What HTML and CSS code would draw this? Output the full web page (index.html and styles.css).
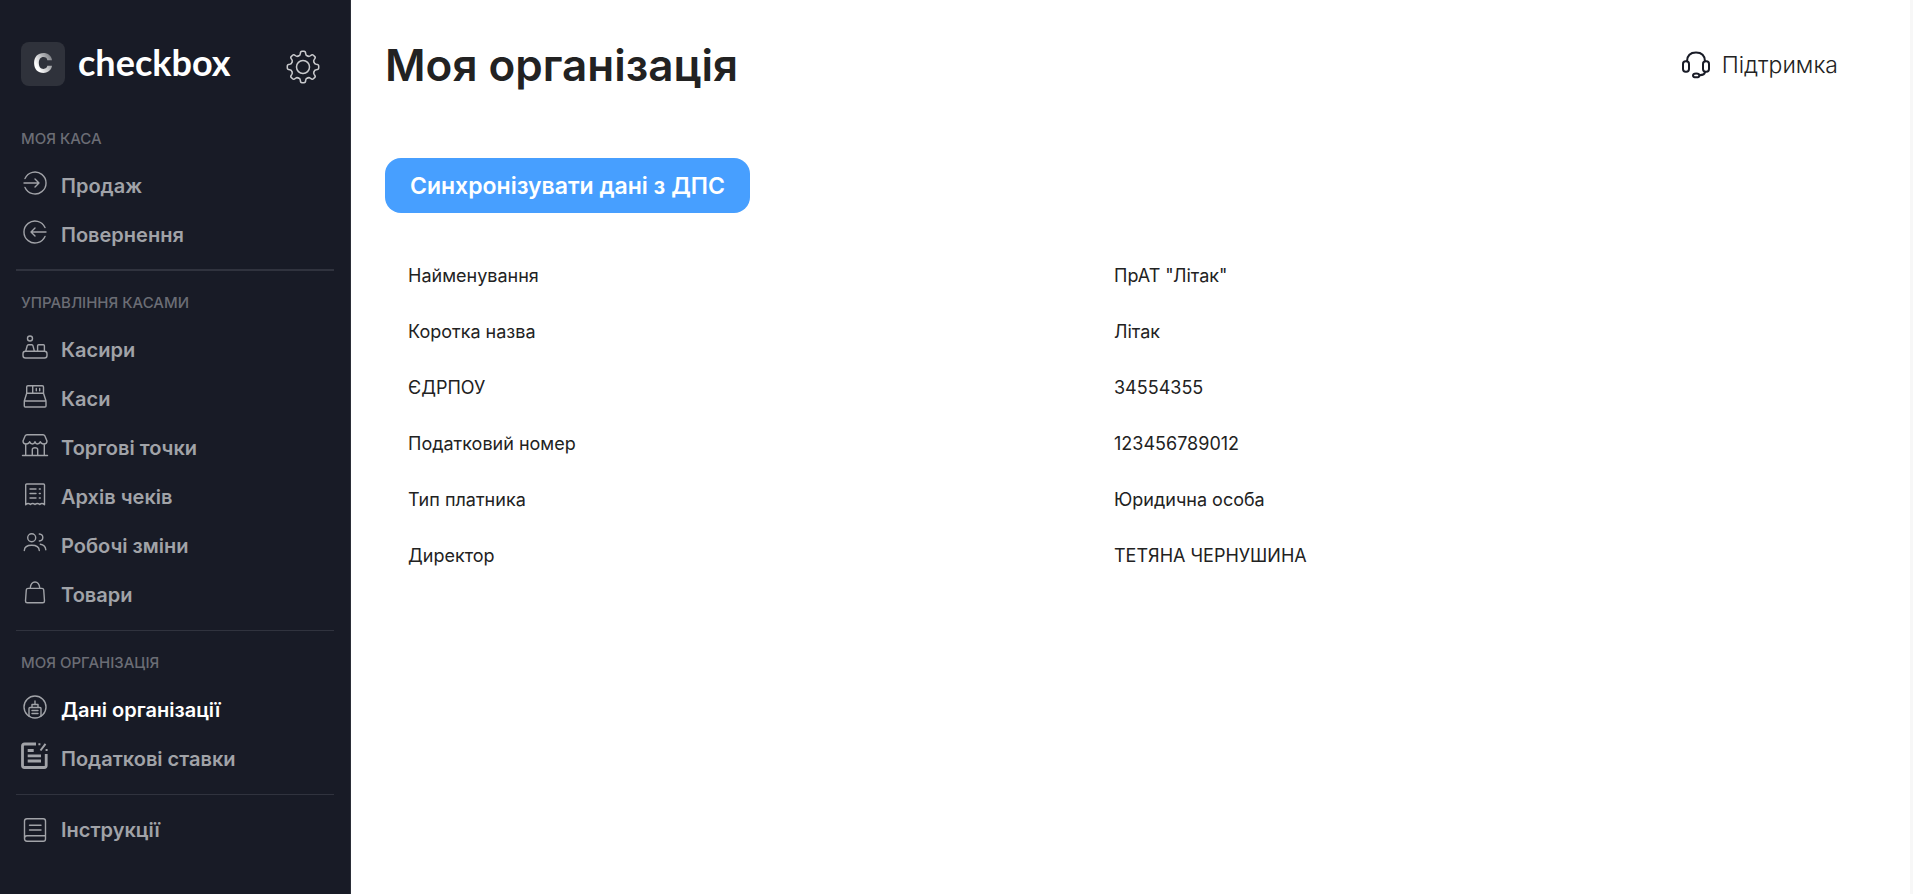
FILE: index.html
```html
<!DOCTYPE html>
<html lang="uk">
<head>
<meta charset="utf-8">
<title>Моя організація</title>
<link rel="stylesheet" href="styles.css">
</head>
<body>
<div class="layout">
  <aside class="sidebar">
    <div class="brand">
      <a class="brand-link" href="#">
        <span class="brand-mark"><span class="brand-letter">C</span></span>
        <span class="brand-name">checkbox</span>
      </a>
      <button class="settings" type="button" aria-label="Налаштування">
        <svg viewBox="-17 -17 34 34" width="34" height="34">
          <defs><path id="tooth" d="M-4.6 -11.1Q-2.9 -11.3 -2.7 -13.2Q-2.6 -15.7 -1 -15.7H1Q2.6 -15.7 2.7 -13.2Q2.9 -11.3 4.6 -11.1"/></defs>
          <use href="#tooth"/><use href="#tooth" transform="rotate(45)"/><use href="#tooth" transform="rotate(90)"/><use href="#tooth" transform="rotate(135)"/><use href="#tooth" transform="rotate(180)"/><use href="#tooth" transform="rotate(225)"/><use href="#tooth" transform="rotate(270)"/><use href="#tooth" transform="rotate(315)"/>
          <circle r="6.5"/>
        </svg>
      </button>
    </div>
    <nav>
      <section class="group group-strong">
        <h2 class="group-title">МОЯ КАСА</h2>
        <a class="item" href="#"><svg class="icon" viewBox="0 0 28 28"><path d="M4 9.5A11 11 0 1 1 4 18.5M3 14H18M14 10L18 14L14 18"/></svg>Продаж</a>
        <a class="item" href="#"><svg class="icon" viewBox="0 0 28 28"><path d="M24 9.5A11 11 0 1 0 24 18.5M25 14H10M14 10L10 14L14 18"/></svg>Повернення</a>
      </section>
      <section class="group">
        <h2 class="group-title">УПРАВЛІННЯ КАСАМИ</h2>
        <a class="item" href="#"><svg class="icon" viewBox="0 0 28 28"><circle cx="9" cy="5.5" r="2.5"/><rect x="2" y="18.3" width="24" height="6.7" rx="2.5"/><path d="M4.8 18L6.2 12.8Q6.5 11.8 7.5 11.8H10.8Q11.8 11.8 12 12.8L13.3 18M16.6 18V12.8Q16.6 11.8 17.6 11.8H22.4Q23.4 11.8 23.4 12.8V18"/></svg>Касири</a>
        <a class="item" href="#"><svg class="icon" viewBox="0 0 28 28"><path d="M5.7 11.3V5Q5.7 3.8 6.9 3.8H21.3Q22.5 3.8 22.5 5V11.3ZM11.7 4V11M15.3 6.5V8.8M18.7 6.5V8.8M5.7 11.3L3.3 19V24Q3.3 25 4.3 25H24Q25 25 25 24V19L22.5 11.3M3.3 19H25"/></svg>Каси</a>
        <a class="item" href="#"><svg class="icon" viewBox="0 0 28 28"><path d="M6 3.7H22Q23.3 3.7 23.8 4.8L26 10Q26 13 23 13Q20 13 19.3 10.7Q18.5 13 16.2 13Q14.5 13 14 10.7Q13.3 13 11.5 13Q9.4 13 8.7 10.7Q8 13 5 13Q2 13 2 10L4.2 4.8Q4.7 3.7 6 3.7ZM4.7 13V24.5M23.3 13V24.5M1.5 24.5H26.5M11.3 24.5V18.5Q11.3 16.7 14 16.7Q16.7 16.7 16.7 18.5V24.5"/></svg>Торгові точки</a>
        <a class="item" href="#"><svg class="icon" viewBox="0 0 28 28"><path d="M4.7 24.8V5Q4.7 4 5.7 4H22.5Q23.5 4 23.5 5V24.8Q21 22.5 18.8 24.5Q16.4 22.5 14 24.5Q11.6 22.5 9.4 24.5Q7 22.5 4.7 24.8ZM9 9H15M9 13.5H15M9 18H15M18.3 9H19.3M18.3 13.5H19.3M18.3 18H19.3"/></svg>Архів чеків</a>
        <a class="item" href="#"><svg class="icon" viewBox="0 0 28 28"><circle cx="10.7" cy="8.7" r="4"/><path d="M3.3 21.5Q3.5 16.2 10.7 16.2Q18 16.2 18.3 21.5M18.3 5Q21.8 5.3 21.8 8.4Q21.8 11.5 18.3 12M19.3 15.2Q24.4 15.8 24.8 20.8"/></svg>Робочі зміни</a>
        <a class="item" href="#"><svg class="icon" viewBox="0 0 28 28"><path d="M7 10.4H21Q22.5 10.4 22.7 11.8L23.5 23Q23.5 24.8 21.8 24.8H6.2Q4.5 24.8 4.5 23L5.3 11.8Q5.5 10.4 7 10.4ZM9.2 10Q10 4 14 4Q18 4 18.8 10"/></svg>Товари</a>
      </section>
      <section class="group">
        <h2 class="group-title">МОЯ ОРГАНІЗАЦІЯ</h2>
        <a class="item item-active" href="#" aria-current="page"><svg class="icon" viewBox="0 0 28 28"><circle cx="14" cy="14" r="11"/><path d="M8 23V15.5Q8 14.5 9 14.5H19Q20 14.5 20 15.5V23M11 14V11.5H17V14M14 11.5V8M11 17.5H17M11 20.5H17"/></svg>Дані організації</a>
        <a class="item" href="#"><svg class="icon icon-bold" viewBox="0 0 28 28"><path d="M15 2H3.5Q1.5 2 1.5 4V23.5Q1.5 25.5 3.5 25.5H23.2Q25.2 25.5 25.2 23.5V12M6.7 8.5H12.7M6.7 13.8H20M6.7 19H20"/><path class="thin" d="M24.5 1.8L19.5 8.5M17.4 2.2H19.4M24.6 8H26.6"/></svg>Податкові ставки</a>
      </section>
      <section class="group group-last">
        <a class="item item-even" href="#"><svg class="icon" viewBox="0 0 28 28"><path d="M6 2.8H22.3Q24.5 2.8 24.5 5V23Q24.5 25.2 22.3 25.2H6Q3.5 25.2 3.5 22.8V5Q3.5 2.8 6 2.8ZM3.5 22.8Q3.5 19.8 6 19.8H24.5M8.5 9.3H20M8.5 14H20"/></svg>Інструкції</a>
      </section>
    </nav>
  </aside>
  <main class="content">
    <header class="topbar">
      <h1 class="title">Моя організація</h1>
      <a class="support" href="#">
        <svg viewBox="0 0 28 28" width="28" height="28"><path d="M5 10.3Q5.3 1.6 14 1.6Q22.7 1.6 23 10.3M23 21Q22.6 24 17.6 24.2"/><rect x="1" y="10.3" width="6" height="10.4" rx="2.6"/><rect x="21" y="10.3" width="6" height="10.4" rx="2.6"/><ellipse cx="14.2" cy="24.4" rx="3.2" ry="1.9"/></svg>
        Підтримка
      </a>
    </header>
    <button class="sync" type="button">Синхронізувати дані з ДПС</button>
    <table class="details">
      <tbody>
        <tr><th scope="row">Найменування</th><td>ПрАТ "Літак"</td></tr>
        <tr><th scope="row">Коротка назва</th><td>Літак</td></tr>
        <tr><th scope="row">ЄДРПОУ</th><td>34554355</td></tr>
        <tr><th scope="row">Податковий номер</th><td>123456789012</td></tr>
        <tr><th scope="row">Тип платника</th><td>Юридична особа</td></tr>
        <tr><th scope="row">Директор</th><td>ТЕТЯНА ЧЕРНУШИНА</td></tr>
      </tbody>
    </table>
  </main>
</div>
</body>
</html>
```
FILE: styles.css
```css
* { box-sizing: border-box; }

body {
  margin: 0;
  background: #fff;
  color: #222;
  font-family: Inter, "Liberation Sans", sans-serif;
}

svg {
  fill: none;
  stroke: currentColor;
  stroke-linecap: round;
  stroke-linejoin: round;
}

.layout {
  display: flex;
  min-height: 100vh;
  border-right: 3px solid #f7f7f7;
}

.sidebar {
  flex: 0 0 351px;
  padding: 42px 16px 24px;
  background: #181b26;
  border-right: 1px solid #2b2e38;
}

.brand {
  display: flex;
  justify-content: space-between;
  align-items: center;
  margin-bottom: 21px;
  padding: 0 14px 0 5px;
}

.brand-link {
  display: flex;
  align-items: center;
  gap: 13px;
  color: #fff;
  text-decoration: none;
}

.brand-mark {
  display: grid;
  place-items: center;
  width: 44px;
  height: 44px;
  border-radius: 8px;
  background: #2f323b;
}

.brand-letter {
  background: linear-gradient(60deg, #fff 30%, #85878c 80%);
  background-clip: text;
  color: transparent;
  font-size: 27px;
  font-weight: 800;
  line-height: 32px;
}

.brand-name {
  padding-bottom: 4px;
  font-family: Lato, sans-serif;
  font-size: 36px;
  font-weight: 700;
  line-height: 40px;
}

.settings {
  height: 34px;
  margin-top: 6px;
  padding: 0;
  border: 0;
  background: none;
  color: #c8c9cc;
  stroke-width: 1.5;
  cursor: pointer;
}

.group {
  padding: 22px 0 11px;
  border-bottom: 1px solid #30333e;
}

.group-strong {
  padding-bottom: 10px;
  border-bottom-width: 2px;
}

.group-last {
  padding: 10px 0 0;
  border: 0;
}

.group-title {
  margin: 0 0 12px;
  padding-left: 5px;
  color: #6b6d75;
  font-size: 15px;
  font-weight: 500;
  line-height: 20px;
}

.item {
  display: flex;
  align-items: center;
  gap: 12px;
  height: 49px;
  padding-left: 5px;
  color: #a1a3a8;
  font-size: 20px;
  font-weight: 600;
  text-decoration: none;
}

.item-active { color: #fff; }

.icon {
  flex: none;
  width: 28px;
  height: 28px;
  margin-bottom: 6px;
  color: #a1a3a8;
  stroke-width: 1.4;
}

.item-even .icon { margin-bottom: 0; }

.icon-bold {
  stroke-width: 2.8;
  stroke-linecap: butt;
}

.icon-bold .thin { stroke-width: 2; }

.content {
  flex: 1;
  padding: 40px 72px 40px 34px;
}

.topbar {
  display: flex;
  justify-content: space-between;
  align-items: center;
  margin-bottom: 68px;
}

.title {
  margin: 0;
  font-size: 44px;
  font-weight: 600;
  line-height: 50px;
}

.support {
  display: flex;
  align-items: center;
  gap: 12px;
  color: #222;
  font-size: 23px;
  font-weight: 300;
  text-decoration: none;
}

.support svg {
  color: #181b26;
  stroke-width: 2;
}

.sync {
  height: 55px;
  padding: 0 25px;
  border: 0;
  border-radius: 16px;
  background: #479fff;
  color: #fff;
  font: 600 23px Inter, "Liberation Sans", sans-serif;
  cursor: pointer;
}

.details {
  width: calc(100% - 41px);
  margin-top: 34px;
  border-collapse: collapse;
  font-size: 18px;
  table-layout: fixed;
}

.details th,
.details td {
  width: 50%;
  height: 56px;
  padding: 0 23px;
  font-weight: 400;
  text-align: left;
}
```
